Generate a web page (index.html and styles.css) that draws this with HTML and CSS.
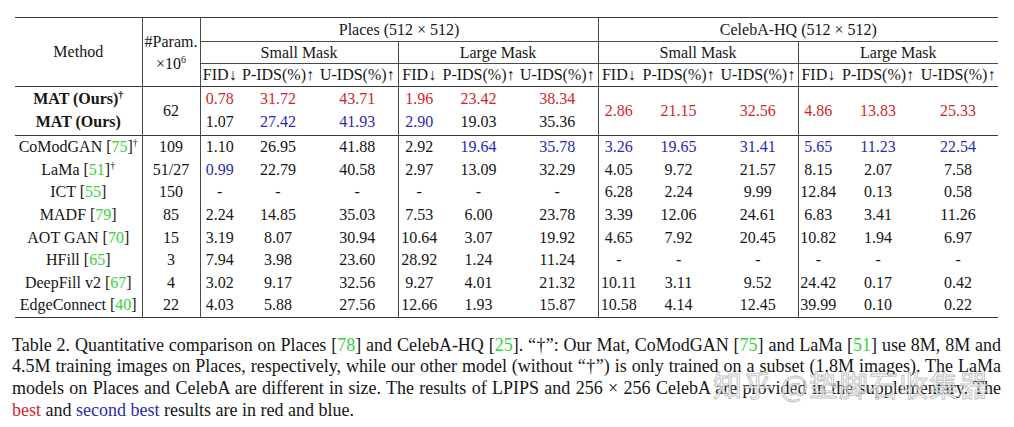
FILE: index.html
```html
<!DOCTYPE html>
<html lang="en">
<head>
<meta charset="utf-8">
<title>Table 2</title>
<link rel="stylesheet" href="styles.css">
</head>
<body>
<div class="page">
  <table class="results">
    <colgroup>
      <col class="w-method"><col class="w-param">
      <col class="w-a1"><col class="w-a2"><col class="w-a3">
      <col class="w-b1"><col class="w-b2"><col class="w-b3">
      <col class="w-c1"><col class="w-c2"><col class="w-c3">
      <col class="w-d1"><col class="w-d2"><col class="w-d3">
    </colgroup>
    <thead>
      <tr class="r1">
        <th rowspan="3" class="vr">Method</th>
        <th rowspan="3" class="vr param">#Param.<br>×10<sup>6</sup></th>
        <th colspan="6" class="grp vr">Places (512 × 512)</th>
        <th colspan="6" class="grp">CelebA-HQ (512 × 512)</th>
      </tr>
      <tr class="r2">
        <th colspan="3" class="sub vr">Small Mask</th>
        <th colspan="3" class="sub vr">Large Mask</th>
        <th colspan="3" class="sub vr">Small Mask</th>
        <th colspan="3" class="sub">Large Mask</th>
      </tr>
      <tr class="r3">
        <th>FID↓</th><th>P-IDS(%)↑</th><th class="vr">U-IDS(%)↑</th>
        <th>FID↓</th><th>P-IDS(%)↑</th><th class="vr">U-IDS(%)↑</th>
        <th>FID↓</th><th>P-IDS(%)↑</th><th class="vr">U-IDS(%)↑</th>
        <th>FID↓</th><th>P-IDS(%)↑</th><th>U-IDS(%)↑</th>
      </tr>
    </thead>
    <tbody class="ours">
      <tr class="m1">
        <th class="vr bold">MAT (Ours)<sup>†</sup></th>
        <td rowspan="2" class="vr">62</td>
        <td class="red">0.78</td><td class="red">31.72</td><td class="red vr">43.71</td>
        <td class="red">1.96</td><td class="red">23.42</td><td class="red vr">38.34</td>
        <td rowspan="2" class="red">2.86</td><td rowspan="2" class="red">21.15</td><td rowspan="2" class="red vr">32.56</td>
        <td rowspan="2" class="red">4.86</td><td rowspan="2" class="red">13.83</td><td rowspan="2" class="red">25.33</td>
      </tr>
      <tr class="m2">
        <th class="vr bold">MAT (Ours)</th>
        <td>1.07</td><td class="blue">27.42</td><td class="blue vr">41.93</td>
        <td class="blue">2.90</td><td>19.03</td><td class="vr">35.36</td>
      </tr>
    </tbody>
    <tbody class="others">
      <tr>
        <th class="vr">CoModGAN [<span class="cite">75</span>]<sup>†</sup></th><td class="vr">109</td>
        <td>1.10</td><td>26.95</td><td class="vr">41.88</td>
        <td>2.92</td><td class="blue">19.64</td><td class="blue vr">35.78</td>
        <td class="blue">3.26</td><td class="blue">19.65</td><td class="blue vr">31.41</td>
        <td class="blue">5.65</td><td class="blue">11.23</td><td class="blue">22.54</td>
      </tr>
      <tr>
        <th class="vr">LaMa [<span class="cite">51</span>]<sup>†</sup></th><td class="vr">51/27</td>
        <td class="blue">0.99</td><td>22.79</td><td class="vr">40.58</td>
        <td>2.97</td><td>13.09</td><td class="vr">32.29</td>
        <td>4.05</td><td>9.72</td><td class="vr">21.57</td>
        <td>8.15</td><td>2.07</td><td>7.58</td>
      </tr>
      <tr>
        <th class="vr">ICT [<span class="cite">55</span>]</th><td class="vr">150</td>
        <td>-</td><td>-</td><td class="vr">-</td>
        <td>-</td><td>-</td><td class="vr">-</td>
        <td>6.28</td><td>2.24</td><td class="vr">9.99</td>
        <td>12.84</td><td>0.13</td><td>0.58</td>
      </tr>
      <tr>
        <th class="vr">MADF [<span class="cite">79</span>]</th><td class="vr">85</td>
        <td>2.24</td><td>14.85</td><td class="vr">35.03</td>
        <td>7.53</td><td>6.00</td><td class="vr">23.78</td>
        <td>3.39</td><td>12.06</td><td class="vr">24.61</td>
        <td>6.83</td><td>3.41</td><td>11.26</td>
      </tr>
      <tr>
        <th class="vr">AOT GAN [<span class="cite">70</span>]</th><td class="vr">15</td>
        <td>3.19</td><td>8.07</td><td class="vr">30.94</td>
        <td>10.64</td><td>3.07</td><td class="vr">19.92</td>
        <td>4.65</td><td>7.92</td><td class="vr">20.45</td>
        <td>10.82</td><td>1.94</td><td>6.97</td>
      </tr>
      <tr>
        <th class="vr">HFill [<span class="cite">65</span>]</th><td class="vr">3</td>
        <td>7.94</td><td>3.98</td><td class="vr">23.60</td>
        <td>28.92</td><td>1.24</td><td class="vr">11.24</td>
        <td>-</td><td>-</td><td class="vr">-</td>
        <td>-</td><td>-</td><td>-</td>
      </tr>
      <tr>
        <th class="vr">DeepFill v2 [<span class="cite">67</span>]</th><td class="vr">4</td>
        <td>3.02</td><td>9.17</td><td class="vr">32.56</td>
        <td>9.27</td><td>4.01</td><td class="vr">21.32</td>
        <td>10.11</td><td>3.11</td><td class="vr">9.52</td>
        <td>24.42</td><td>0.17</td><td>0.42</td>
      </tr>
      <tr>
        <th class="vr">EdgeConnect [<span class="cite">40</span>]</th><td class="vr">22</td>
        <td>4.03</td><td>5.88</td><td class="vr">27.56</td>
        <td>12.66</td><td>1.93</td><td class="vr">15.87</td>
        <td>10.58</td><td>4.14</td><td class="vr">12.45</td>
        <td>39.99</td><td>0.10</td><td>0.22</td>
      </tr>
    </tbody>
  </table>

  <p class="caption">
    <span class="line">Table 2. Quantitative comparison on Places [<span class="cite">78</span>] and CelebA-HQ [<span class="cite">25</span>]. “†”: Our Mat, CoModGAN [<span class="cite">75</span>] and LaMa [<span class="cite">51</span>] use 8M, 8M and</span>
    <span class="line">4.5M training images on Places, respectively, while our other model (without “†”) is only trained on a subset (1.8M images). The LaMa</span>
    <span class="line">models on Places and CelebA are different in size. The results of LPIPS and 256 × 256 CelebA are provided in the supplementary. The</span>
    <span class="line last"><span class="red">best</span> and <span class="blue">second best</span> results are in red and blue.</span>
  </p>

  <div class="watermark">知乎 @垫脚石收集器</div>
</div>
</body>
</html>
```

FILE: styles.css
```css
html, body {
  margin: 0;
  padding: 0;
  background: #ffffff;
}

.page {
  position: relative;
  width: 1014px;
  height: 427px;
  padding: 17px 0 0 12px;
  box-sizing: border-box;
  font-family: "Liberation Serif", "Times New Roman", serif;
  color: #151515;
}

.results {
  margin-left: 3px;
  border-collapse: collapse;
  table-layout: fixed;
  width: 983px;
  font-family: "Liberation Serif", "Times New Roman", serif;
  font-size: 16px;
  color: #151515;
  border-top: 1px solid #3a3a3a;
  border-bottom: 1px solid #3a3a3a;
}

.w-method { width: 127px; }
.w-param { width: 58px; }
.w-a1 { width: 39px; }
.w-a2 { width: 78px; }
.w-a3 { width: 81px; }
.w-b1 { width: 42px; }
.w-b2 { width: 77px; }
.w-b3 { width: 81px; }
.w-c1 { width: 41px; }
.w-c2 { width: 79px; }
.w-c3 { width: 80px; }
.w-d1 { width: 40px; }
.w-d2 { width: 80px; }
.w-d3 { width: 80px; }

.results th,
.results td {
  padding: 0;
  text-align: center;
  vertical-align: middle;
  font-weight: normal;
  line-height: 20px;
  white-space: nowrap;
}

.results .vr {
  border-right: 1px solid #4a4a4a;
}

.results thead {
  border-bottom: 1px solid #3a3a3a;
}

.results .r1 th { height: 23px; }
.results .r2 th { height: 21px; }
.results .r3 th { height: 22px; }

.results .grp,
.results .sub {
  border-bottom: 1px solid #4a4a4a;
}

.results .param {
  line-height: 22px;
  padding-top: 2px;
}

.results sup {
  font-size: 10px;
  line-height: 0;
  vertical-align: 6px;
}

.results .bold {
  font-weight: bold;
}

.results tbody.ours {
  border-bottom: 1px solid #3a3a3a;
}

.results .m1 th,
.results .m1 td { height: 23px; }
.results .m2 th { height: 23px; padding-bottom: 2px; }
.results .m2 td { height: 23px; padding-bottom: 2px; }

.results tbody.others th,
.results tbody.others td {
  height: 22.6px;
}

.red { color: #d21f2c; }
.blue { color: #2a2ab4; }
.cite { color: #38d238; }

.caption {
  margin: 17px 0 0 0;
  width: 989px;
  font-family: "Liberation Serif", "Times New Roman", serif;
  font-size: 18px;
  line-height: 21.7px;
  color: #151515;
}

.caption .line {
  display: block;
  white-space: nowrap;
  text-align: justify;
  text-align-last: justify;
}

.caption .line.last {
  text-align: left;
  text-align-last: left;
}

.watermark {
  position: absolute;
  left: 713px;
  top: 366px;
  font-family: "Noto Sans CJK SC", sans-serif;
  font-size: 29px;
  line-height: 36px;
  letter-spacing: 1px;
  color: rgba(255, 255, 255, 0.75);
  -webkit-text-stroke: 1px rgba(140, 140, 140, 0.55);
  white-space: nowrap;
}
```
